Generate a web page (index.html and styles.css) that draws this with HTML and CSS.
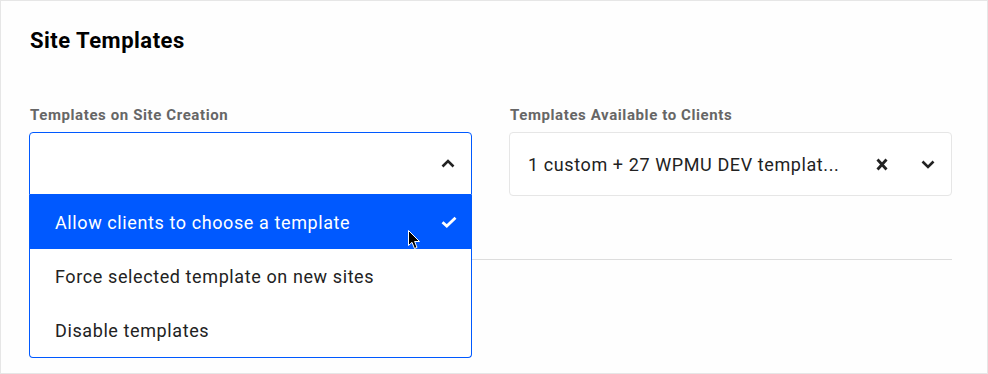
FILE: index.html
```html
<!DOCTYPE html>
<html lang="en">
<head>
    <meta charset="UTF-8">
    <meta name="viewport" content="width=device-width, initial-scale=1.0">
    <title>Site Templates</title>
    <link rel="stylesheet" href="styles.css">
</head>
<body>
    <div class="panel">
        <h2 class="panel-title">Site Templates</h2>

        <div class="fields">
            <div class="field">
                <label class="field-label">Templates on Site Creation</label>
                <div class="select open">
                    <div class="select-value"></div>
                    <span class="select-icon">
                        <svg width="14" height="9" viewBox="0 0 14 9"><path d="M1.5 7.5 L7 2 L12.5 7.5" fill="none" stroke="#222" stroke-width="2.6"/></svg>
                    </span>
                    <ul class="select-list">
                        <li class="option selected">
                            Allow clients to choose a template
                            <svg class="check" width="16" height="12" viewBox="0 0 16 12"><path d="M1.5 6.2 L5.8 10 L14.5 1.8" fill="none" stroke="#fff" stroke-width="2.8"/></svg>
                        </li>
                        <li class="option">Force selected template on new sites</li>
                        <li class="option">Disable templates</li>
                    </ul>
                    <!-- mouse pointer -->
                    <svg class="cursor" width="13" height="20" viewBox="0 0 13 20"><path d="M0.5 0.5 L0.5 15.5 L4 12.3 L6.5 18.5 L9 17.4 L6.6 11.5 L11.5 11.5 Z" fill="#000" stroke="#fff" stroke-width="1"/></svg>
                </div>
            </div>

            <div class="field">
                <label class="field-label">Templates Available to Clients</label>
                <div class="select">
                    <div class="select-value">1 custom + 27 WPMU DEV templat...</div>
                    <span class="select-clear">
                        <svg width="12" height="13" viewBox="0 0 12 13"><path d="M1.5 1.5 L10.5 11.5 M10.5 1.5 L1.5 11.5" fill="none" stroke="#222" stroke-width="2.8"/></svg>
                    </span>
                    <span class="select-icon">
                        <svg width="14" height="9" viewBox="0 0 14 9"><path d="M1.5 1.5 L7 7 L12.5 1.5" fill="none" stroke="#222" stroke-width="2.6"/></svg>
                    </span>
                </div>
            </div>
        </div>

        <hr class="divider">
    </div>
</body>
</html>
```

FILE: styles.css
```css
* {
    box-sizing: border-box;
    margin: 0;
    padding: 0;
}
body {
    font-family: Roboto, 'Noto Sans', sans-serif;
    background: #fff;
}
.panel {
    width: 988px;
    height: 374px;
    border: 1px solid #e6e6e6;
    background: #fefefe;
    padding: 25px 35px 0 28px;
}
.panel-title {
    font-size: 22px;
    line-height: 30px;
    font-weight: 700;
    letter-spacing: 0.5px;
    color: #000;
    padding-left: 1px;
}
.fields {
    display: flex;
    gap: 37px;
    margin-top: 49px;
}
.field {
    flex: 1;
}
.field-label {
    display: block;
    font-size: 15px;
    line-height: 20px;
    font-weight: 700;
    letter-spacing: 0.6px;
    color: #666;
    margin-bottom: 7px;
    padding-left: 1px;
}
.select {
    position: relative;
    height: 64px;
    border: 1px solid #e6e6e6;
    border-radius: 4px;
    background: #fff;
    display: flex;
    align-items: center;
    padding: 0 16px 0 18px;
}
.select.open {
    border-color: #0059ff;
    height: 63px;
    border-bottom-left-radius: 0;
    border-bottom-right-radius: 0;
}
.select-value {
    flex: 1;
    font-size: 18px;
    letter-spacing: 0.6px;
    color: #222;
    white-space: nowrap;
    overflow: hidden;
}
.select-clear {
    display: flex;
    margin-right: 33px;
}
.select-icon {
    display: flex;
}
.select-list {
    list-style: none;
    position: absolute;
    top: 62px;
    left: -1px;
    right: -1px;
    background: #fff;
    border: 1px solid #0059ff;
    border-top: none;
    border-radius: 0 0 4px 4px;
    z-index: 2;
}
.option {
    height: 54px;
    display: flex;
    align-items: center;
    justify-content: space-between;
    padding: 0 14px 0 25px;
    font-size: 18px;
    letter-spacing: 0.6px;
    color: #222;
}
.option.selected {
    background: #0059ff;
    color: #fff;
}
.cursor {
    position: absolute;
    left: 378px;
    top: 97px;
    z-index: 3;
}
.divider {
    border: none;
    border-top: 1px solid #ddd;
    margin-top: 63px;
}
```
